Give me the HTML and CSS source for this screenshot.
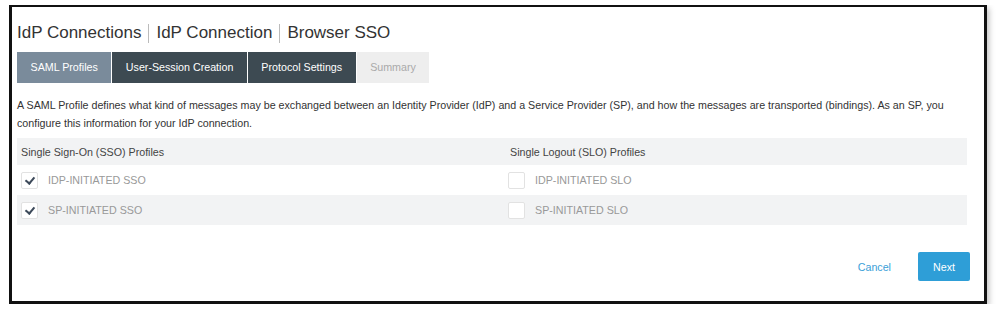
FILE: index.html
```html
<!DOCTYPE html>
<html lang="en">
<head>
    <meta charset="UTF-8">
    <title>Browser SSO - SAML Profiles</title>
    <link rel="stylesheet" href="styles.css">
</head>
<body>

<div class="frame">
    <h1 class="crumbs">
        <span>IdP Connections</span><span class="sep"></span><span>IdP Connection</span><span class="sep"></span><span>Browser SSO</span>
    </h1>

    <div class="tabs">
        <div class="tab active">SAML Profiles</div>
        <div class="tab">User-Session Creation</div>
        <div class="tab">Protocol Settings</div>
        <div class="tab disabled">Summary</div>
    </div>

    <p class="desc">A SAML Profile defines what kind of messages may be exchanged between an Identity Provider (IdP) and a Service Provider (SP), and how the messages are transported (bindings). As an SP, you configure this information for your IdP connection.</p>

    <div class="profiles">
        <div class="row head">
            <div class="cell">Single Sign-On (SSO) Profiles</div>
            <div class="cell">Single Logout (SLO) Profiles</div>
        </div>
        <div class="row">
            <div class="cell"><span class="check on"></span>IDP-INITIATED SSO</div>
            <div class="cell"><span class="check"></span>IDP-INITIATED SLO</div>
        </div>
        <div class="row alt">
            <div class="cell"><span class="check on"></span>SP-INITIATED SSO</div>
            <div class="cell"><span class="check"></span>SP-INITIATED SLO</div>
        </div>
    </div>

    <div class="actions">
        <button class="link">Cancel</button>
        <button class="primary">Next</button>
    </div>
</div>

</body>
</html>
```

FILE: styles.css
```css
body {
    font-family: "Liberation Sans", Arial, sans-serif;
    margin: 5px 0 0 9px;
    background: #fff;
}
.frame {
    width: 950px;
    height: 279px;
    border: 3px solid #111;
    border-top-width: 2px;
    padding: 15px 17px 0 5px;
    box-shadow: 2px 3px 6px rgba(0, 0, 0, 0.25);
    display: flex;
    flex-direction: column;
}
.crumbs {
    margin: 0;
    font-size: 17px;
    font-weight: normal;
    color: #333;
    line-height: 22px;
    display: flex;
    align-items: center;
}
.sep {
    display: inline-block;
    width: 1px;
    height: 19px;
    background: #bbb;
    margin: 0 7px;
}
.tabs {
    display: flex;
    margin-top: 8px;
    gap: 1px;
}
.tab {
    height: 31px;
    line-height: 31px;
    padding: 0 13.5px;
    font-size: 10.7px;
    color: #fff;
    background: #3d4a52;
}
.tab.active {
    background: #7a8b9b;
}
.tab.disabled {
    background: #eeeeee;
    color: #aaa;
}
.desc {
    margin: 13px 0 0;
    font-size: 10.7px;
    line-height: 18px;
    color: #333;
}
.profiles {
    margin-top: 6px;
    width: 950px;
}
.row {
    display: flex;
    height: 30px;
    align-items: center;
    font-size: 10.7px;
    color: #999;
}
.row.head {
    height: 27px;
    background: #f2f3f4;
    color: #444;
}
.row.alt {
    background: #f2f3f4;
}
.cell {
    width: 487px;
    padding-left: 4px;
    display: flex;
    align-items: center;
}
.cell + .cell {
    width: auto;
    padding-left: 0;
}
.row.head .cell + .cell {
    padding-left: 2px;
}
.check {
    width: 15px;
    height: 15px;
    border: 1px solid #e2e2e2;
    border-radius: 2px;
    background: #fff;
    margin-right: 10px;
    position: relative;
}
.check.on::after {
    content: "";
    position: absolute;
    left: 5px;
    top: 2px;
    width: 4px;
    height: 7px;
    border: solid #3d4a5a;
    border-width: 0 2.5px 2.5px 0;
    transform: rotate(40deg);
}
.actions {
    display: flex;
    justify-content: flex-end;
    align-items: center;
    margin-top: 27px;
    margin-right: -3px;
    gap: 27px;
}
button {
    font-family: inherit;
    font-size: 10.7px;
    border: none;
    cursor: pointer;
}
.link {
    background: none;
    color: #3aa0d8;
    padding: 0;
}
.primary {
    background: #2e9ed7;
    color: #fff;
    width: 52px;
    height: 29px;
    border-radius: 2px;
}
```
